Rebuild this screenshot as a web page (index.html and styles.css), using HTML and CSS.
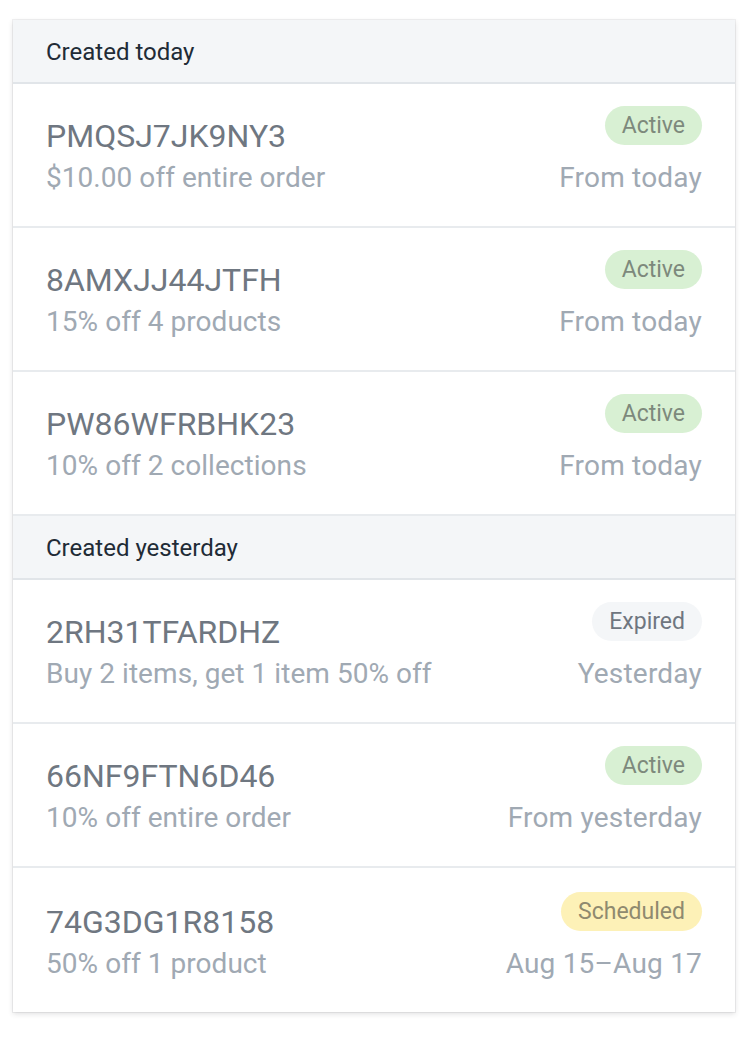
FILE: index.html
```html
<!DOCTYPE html>
<html lang="en">
<head>
<meta charset="utf-8">
<title>Discount codes</title>
<link rel="stylesheet" href="styles.css">
</head>
<body>
<div class="card">
  <div class="group-head">Created today</div>
  <div class="row">
    <div class="left"><div class="code">PMQSJ7JK9NY3</div><div class="desc">$10.00 off entire order</div></div>
    <div class="right"><span class="badge active">Active</span><div class="date">From today</div></div>
  </div>
  <div class="row">
    <div class="left"><div class="code">8AMXJJ44JTFH</div><div class="desc">15% off 4 products</div></div>
    <div class="right"><span class="badge active">Active</span><div class="date">From today</div></div>
  </div>
  <div class="row">
    <div class="left"><div class="code">PW86WFRBHK23</div><div class="desc">10% off 2 collections</div></div>
    <div class="right"><span class="badge active">Active</span><div class="date">From today</div></div>
  </div>
  <div class="group-head">Created yesterday</div>
  <div class="row">
    <div class="left"><div class="code">2RH31TFARDHZ</div><div class="desc">Buy 2 items, get 1 item 50% off</div></div>
    <div class="right"><span class="badge expired">Expired</span><div class="date">Yesterday</div></div>
  </div>
  <div class="row">
    <div class="left"><div class="code">66NF9FTN6D46</div><div class="desc">10% off entire order</div></div>
    <div class="right"><span class="badge active">Active</span><div class="date">From yesterday</div></div>
  </div>
  <div class="row last">
    <div class="left"><div class="code">74G3DG1R8158</div><div class="desc">50% off 1 product</div></div>
    <div class="right"><span class="badge scheduled">Scheduled</span><div class="date">Aug 15–Aug 17</div></div>
  </div>
</div>
</body>
</html>
```
FILE: styles.css
```css
* { box-sizing: border-box; }
html, body { margin: 0; background: #ffffff; }
body {
  padding: 20px 13px;
  font-family: Roboto, "Liberation Sans", Arial, sans-serif;
}
.card {
  background: #ffffff;
  box-shadow: 0 0 0 1px rgba(63, 63, 68, 0.07), 0 2px 5px rgba(63, 63, 68, 0.16);
}
.group-head {
  height: 64px;
  padding: 16px 33px 0;
  font-size: 24px;
  line-height: 32px;
  color: #212b36;
  background: #f4f6f8;
  border-bottom: 2px solid #e1e5e9;
}
.row {
  height: 144px;
  display: flex;
  justify-content: space-between;
  align-items: flex-end;
  padding: 22px 33px 28px 33px;
  border-bottom: 2px solid #e8ebee;
}
.row.last { border-bottom: none; }
.left { display: flex; flex-direction: column; }
.right { display: flex; flex-direction: column; align-items: flex-end; }
.code {
  font-size: 32px;
  line-height: 44px;
  color: #6f7781;
}
.desc, .date {
  font-size: 28px;
  line-height: 40px;
  color: #a0a9b3;
  white-space: nowrap;
}
.desc { letter-spacing: 0.05px; }
.date { letter-spacing: 0.2px; }
.badge {
  display: inline-block;
  height: 39px;
  line-height: 39px;
  padding: 0 17px;
  border-radius: 20px;
  font-size: 23px;
  margin-bottom: 13px;
}
.badge.active { background: #d8f0d3; color: #7d897c; }
.badge.expired { background: #f4f6f8; color: #6f7680; }
.badge.scheduled { background: #fdf1b7; color: #8f8a6f; }
```
